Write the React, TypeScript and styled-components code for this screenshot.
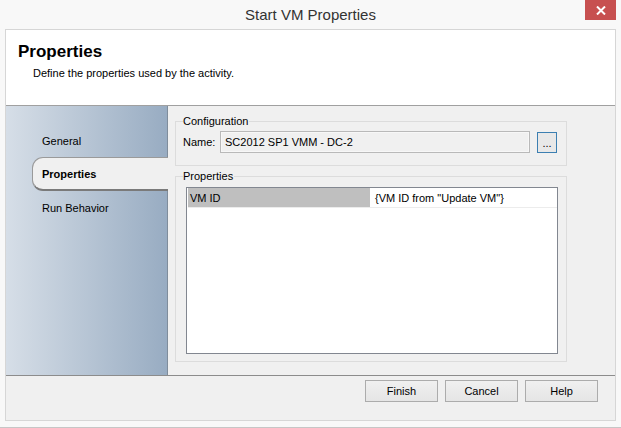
import React, { FC } from 'react'
import styled, { createGlobalStyle } from 'styled-components'

const GlobalStyle = createGlobalStyle`
  html, body {
    margin: 0;
    padding: 0;
    background: #f8f8f8;
  }
  * {
    box-sizing: border-box;
  }
`

const uiFont = `'Liberation Sans', Arial, sans-serif`

type NavItemType = {
  title: string
  active?: boolean
}

const navItems: NavItemType[] = [
  { title: 'General' },
  { title: 'Properties', active: true },
  { title: 'Run Behavior' },
]

const properties = [{ name: 'VM ID', value: '{VM ID from "Update VM"}' }]

const App: FC = () => {
  return (
    <>
      <GlobalStyle />
      <Window>
        <TitleBar>
          <Title>Start VM Properties</Title>
          <CloseButton type={'button'}>
            <svg width="10" height="9" viewBox="0 0 10 9">
              <path d="M1 0.5 L9 8.5 M9 0.5 L1 8.5" stroke="#fff" strokeWidth="2" />
            </svg>
          </CloseButton>
        </TitleBar>
        <Client>
          <Header>
            <HeaderTitle>Properties</HeaderTitle>
            <HeaderText>Define the properties used by the activity.</HeaderText>
          </Header>
          <Body>
            <Nav>
              {navItems.map((item) => (
                <NavItem key={item.title} $active={!!item.active}>
                  {item.title}
                </NavItem>
              ))}
            </Nav>
            <Content>
              <GroupBox $height={51}>
                <Legend>Configuration</Legend>
                <FieldRow>
                  <FieldLabel>Name:</FieldLabel>
                  <TextField>SC2012 SP1 VMM - DC-2</TextField>
                  <BrowseButton type={'button'}>...</BrowseButton>
                </FieldRow>
              </GroupBox>
              <GroupBox $height={192}>
                <Legend>Properties</Legend>
                <Grid>
                  {properties.map((p) => (
                    <GridRow key={p.name}>
                      <NameCell>{p.name}</NameCell>
                      <ValueCell>{p.value}</ValueCell>
                    </GridRow>
                  ))}
                </Grid>
              </GroupBox>
            </Content>
          </Body>
          <Footer>
            <DialogButton type={'button'}>Finish</DialogButton>
            <DialogButton type={'button'}>Cancel</DialogButton>
            <DialogButton type={'button'}>Help</DialogButton>
          </Footer>
        </Client>
      </Window>
    </>
  )
}

export default App

const Window = styled.div`
  width: 621px;
  height: 428px;
  background: #f8f8f8;
  border-bottom: 1px solid #c6c6c6;
  display: flex;
  flex-direction: column;
  font-family: ${uiFont};
  color: #000;
`

const TitleBar = styled.div`
  position: relative;
  height: 29px;
  display: flex;
  align-items: center;
  justify-content: center;
`

const Title = styled.span`
  font-size: 15px;
  color: #333;
  margin-top: -1px;
`

const CloseButton = styled.button`
  position: absolute;
  top: 0;
  right: 5px;
  width: 31px;
  height: 20px;
  border: none;
  padding: 0;
  background: #c75050;
  display: flex;
  align-items: center;
  justify-content: center;
`

const Client = styled.div`
  margin: 0 5px;
  height: 392px;
  border: 1px solid #d6d6d6;
  display: flex;
  flex-direction: column;
  background: #f0f0f0;
`

const Header = styled.div`
  height: 76px;
  background: #fff;
  border-bottom: 1px solid #a0a0a0;
  padding: 12px 0 0 12px;
`

const HeaderTitle = styled.div`
  font-size: 17px;
  line-height: 20px;
  font-weight: bold;
`

const HeaderText = styled.div`
  font-size: 11px;
  line-height: 13px;
  margin: 5px 0 0 15px;
`

const Body = styled.div`
  height: 269px;
  display: flex;
`

const Nav = styled.div`
  width: 162px;
  flex-shrink: 0;
  background: linear-gradient(to right, #d6dee7, #98acc2);
  border-right: 1px solid #7f8d9c;
  padding-top: 19px;
  display: flex;
  flex-direction: column;
`

const NavItem = styled.div<{ $active: boolean }>`
  font-size: 11px;
  display: flex;
  align-items: center;
  position: relative;
  height: ${({ $active }) => ($active ? '34px' : '33px')};
  padding-left: ${({ $active }) => ($active ? '9px' : '36px')};
  margin-left: ${({ $active }) => ($active ? '26px' : '0')};
  margin-right: ${({ $active }) => ($active ? '-1px' : '0')};
  font-weight: ${({ $active }) => ($active ? 'bold' : 'normal')};
  background: ${({ $active }) => ($active ? '#f0f0f0' : 'transparent')};
  border: ${({ $active }) => ($active ? '1px solid #9a9a9a' : 'none')};
  border-bottom: ${({ $active }) => ($active ? '2px solid #7a7a7a' : 'none')};
  border-right: none;
  border-radius: 11px 0 0 11px;
  &:first-child {
    height: 32px;
  }
`

const Content = styled.div`
  flex: 1;
  padding: 9px 0 0 7px;
  display: flex;
  flex-direction: column;
  gap: 4px;
`

const GroupBox = styled.fieldset<{ $height: number }>`
  margin: 0;
  width: 392px;
  height: ${({ $height }) => $height}px;
  border: 1px solid #dcdcdc;
  padding: 0 9px 0 7px;
  min-width: 0;
`

const Legend = styled.legend`
  font-size: 11px;
  line-height: 13px;
  padding: 0 1px 0 0;
  color: #000;
`

const FieldRow = styled.div`
  display: flex;
  align-items: center;
  margin-top: 3px;
  font-size: 11px;
`

const FieldLabel = styled.span`
  width: 37px;
  flex-shrink: 0;
`

const TextField = styled.div`
  width: 311px;
  height: 22px;
  border: 1px solid #b9b9b9;
  box-shadow: inset 0 0 0 1px #f7f7f7;
  background: #f0f0f0;
  display: flex;
  align-items: center;
  padding-left: 4px;
`

const BrowseButton = styled.button`
  margin-left: 7px;
  width: 20px;
  height: 21px;
  border: 1px solid #3c7fb1;
  background: #e8e8e8;
  font-family: ${uiFont};
  font-size: 11px;
  padding: 0 0 3px;
  display: flex;
  align-items: flex-end;
  justify-content: center;
  line-height: 1;
`

const Grid = styled.div`
  margin: 4px 0 0 3px;
  width: 372px;
  height: 167px;
  background: #fff;
  border: 1px solid #828790;
  padding: 0 0 0 1px;
`

const GridRow = styled.div`
  display: flex;
  height: 20px;
  border-bottom: 1px solid #ececec;
  font-size: 11px;
`

const NameCell = styled.div`
  width: 182px;
  background: #bfbfbf;
  display: flex;
  align-items: center;
  padding-left: 2px;
`

const ValueCell = styled.div`
  flex: 1;
  margin-left: 3px;
  display: flex;
  align-items: center;
  padding-left: 2px;
`

const Footer = styled.div`
  flex: 1;
  border-top: 1px solid #8c8c8c;
  display: flex;
  justify-content: flex-end;
  align-items: flex-start;
  gap: 7px;
  padding: 4px 17px 0 0;
`

const DialogButton = styled.button`
  width: 73px;
  height: 22px;
  border: 1px solid #acacac;
  background: linear-gradient(#f0f0f0, #e5e5e5);
  font-family: ${uiFont};
  font-size: 11px;
  color: #000;
  padding: 0;
`
